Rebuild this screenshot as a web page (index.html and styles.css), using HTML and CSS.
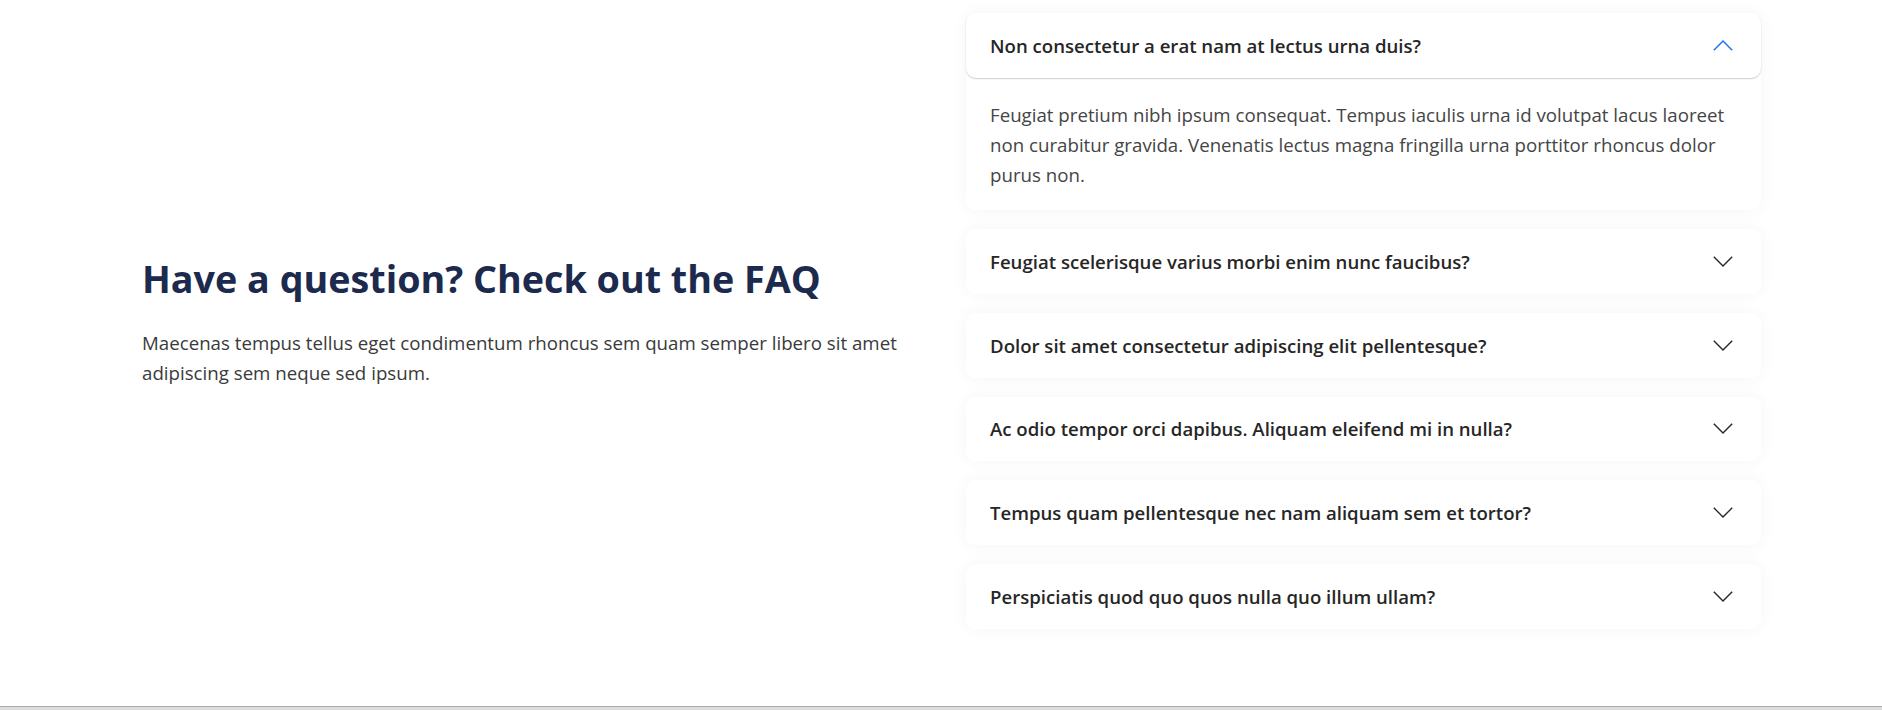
FILE: index.html
```html
<!DOCTYPE html>
<html lang="en">
<head>
<meta charset="utf-8">
<title>FAQ</title>
<link rel="stylesheet" href="styles.css">
</head>
<body>
<section class="faq">
  <div class="intro">
    <h2 class="intro-title">Have a question? Check out the FAQ</h2>
    <p class="intro-text">Maecenas tempus tellus eget condimentum rhoncus sem quam semper libero sit amet adipiscing sem neque sed ipsum.</p>
  </div>
  <div class="accordion">
    <div class="item is-open">
      <button class="item-head" type="button">
        <span class="item-q">Non consectetur a erat nam at lectus urna duis?</span>
        <svg class="chev" width="20" height="11" viewBox="0 0 20 11"><path d="M0.8 10.2 L10 1 L19.2 10.2" fill="none" stroke="currentColor" stroke-width="1.4"/></svg>
      </button>
      <div class="item-body">Feugiat pretium nibh ipsum consequat. Tempus iaculis urna id volutpat lacus laoreet non curabitur gravida. Venenatis lectus magna fringilla urna porttitor rhoncus dolor purus non.</div>
    </div>
    <div class="item">
      <button class="item-head" type="button">
        <span class="item-q">Feugiat scelerisque varius morbi enim nunc faucibus?</span>
        <svg class="chev" width="20" height="11" viewBox="0 0 20 11"><path d="M0.8 0.8 L10 10 L19.2 0.8" fill="none" stroke="currentColor" stroke-width="1.4"/></svg>
      </button>
    </div>
    <div class="item">
      <button class="item-head" type="button">
        <span class="item-q">Dolor sit amet consectetur adipiscing elit pellentesque?</span>
        <svg class="chev" width="20" height="11" viewBox="0 0 20 11"><path d="M0.8 0.8 L10 10 L19.2 0.8" fill="none" stroke="currentColor" stroke-width="1.4"/></svg>
      </button>
    </div>
    <div class="item">
      <button class="item-head" type="button">
        <span class="item-q">Ac odio tempor orci dapibus. Aliquam eleifend mi in nulla?</span>
        <svg class="chev" width="20" height="11" viewBox="0 0 20 11"><path d="M0.8 0.8 L10 10 L19.2 0.8" fill="none" stroke="currentColor" stroke-width="1.4"/></svg>
      </button>
    </div>
    <div class="item">
      <button class="item-head" type="button">
        <span class="item-q">Tempus quam pellentesque nec nam aliquam sem et tortor?</span>
        <svg class="chev" width="20" height="11" viewBox="0 0 20 11"><path d="M0.8 0.8 L10 10 L19.2 0.8" fill="none" stroke="currentColor" stroke-width="1.4"/></svg>
      </button>
    </div>
    <div class="item">
      <button class="item-head" type="button">
        <span class="item-q">Perspiciatis quod quo quos nulla quo illum ullam?</span>
        <svg class="chev" width="20" height="11" viewBox="0 0 20 11"><path d="M0.8 0.8 L10 10 L19.2 0.8" fill="none" stroke="currentColor" stroke-width="1.4"/></svg>
      </button>
    </div>
  </div>
</section>
<div class="bottom-bar"></div>
</body>
</html>
```
FILE: styles.css
```css
* { box-sizing: border-box; }

html, body {
  margin: 0;
  padding: 0;
  background: #ffffff;
}

body {
  font-family: "Open Sans", "Noto Sans", sans-serif;
  color: #333333;
  overflow: hidden;
}

.faq {
  height: 706px;
  display: flex;
  align-items: center;
  padding: 14px 121px 78px 142px;
}

.intro {
  flex: 1;
  padding-right: 40px;
  margin-top: 2px;
}

.intro-title {
  margin: 0 0 27px;
  font-size: 37.7px;
  line-height: 1.2;
  font-weight: 700;
  color: #1c2a4e;
}

.intro-text {
  margin: 0;
  font-size: 18.7px;
  line-height: 30px;
  color: #3a3a3a;
}

.accordion {
  width: 795px;
  display: flex;
  flex-direction: column;
  gap: 19px;
}

.item {
  background: #fff;
  border-radius: 10px;
  box-shadow: 0 0 18px rgba(0, 0, 0, 0.045);
}

.item-head {
  width: 100%;
  height: 64.75px;
  display: flex;
  align-items: center;
  justify-content: space-between;
  padding: 0 28px 0 24px;
  border: 0;
  background: #fff;
  border-radius: 10px;
  font-family: inherit;
  font-size: 18.6px;
  font-weight: 600;
  color: #262626;
  text-align: left;
  cursor: pointer;
}

.is-open .item-head {
  box-shadow: 0 1px 1.5px rgba(0, 0, 0, 0.2);
}

.chev {
  flex: none;
  color: #262626;
}

.is-open .chev {
  color: #1a6ef0;
}

.item-body {
  padding: 22px 24px 20px;
  font-size: 18.7px;
  line-height: 30px;
  color: #454545;
}

.bottom-bar {
  height: 4px;
  border-top: 1px solid #ababab;
  background: #dddddd;
}
```
